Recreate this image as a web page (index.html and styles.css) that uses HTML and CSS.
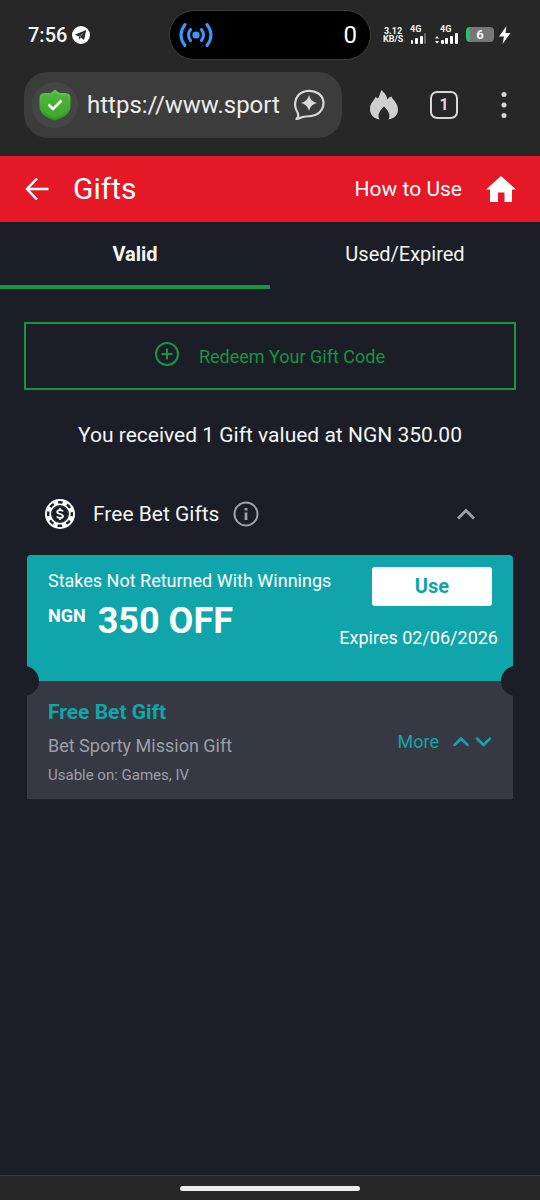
FILE: index.html
```
<!DOCTYPE html>
<html lang="en">
<head>
<meta charset="utf-8">
<meta name="viewport" content="width=device-width, initial-scale=1">
<title>Gifts</title>
<link rel="stylesheet" href="styles.css">
</head>
<body>
<div class="status">
  <div class="status-left">
    <span class="clock">7:56</span>
    <svg class="telegram" width="18" height="18" viewBox="0 0 18 18"><circle cx="9" cy="9" r="9" fill="#fff"/><path d="M2.7 8.7 14.2 4 12 14 8.2 11.1 11.5 6.9 6.6 10.2Z" fill="#272727"/><path d="M6.6 10.2 7.3 13.6 9 11.8 8.2 11.1 11.5 6.9Z" fill="#4a4a4a"/></svg>
  </div>
  <div class="island">
    <svg width="34" height="26" viewBox="0 0 34 26" fill="none" stroke="#3b97fb" stroke-linecap="round"><circle cx="17" cy="13" r="3.6" fill="#3b97fb" stroke="none"/><g stroke-width="3"><path d="M11.5 7.5Q7.5 13 11.5 18.500M22.500 7.500Q26.500 13 22.500 18.500"/><path d="M6 2.500Q-2 13 6 23.500M28 2.500Q36 13 28 23.500"/></g></svg>
    <span>0</span>
  </div>
  <div class="status-right">
    <div class="speed"><span>3.12</span><span>KB/S</span></div>
    <div class="signal">
      <span>4G</span>
      <svg width="17" height="11" viewBox="0 0 17 11" fill="#fff"><rect x="1" y="7" width="2" height="4" rx="1"/><rect x="5" y="5" width="3" height="6" rx="1"/><rect x="10" y="3" width="3" height="8" rx="1"/><rect x="14" y="0" width="2" height="11" rx="1" fill="#666"/></svg>
    </div>
    <div class="signal signal-data">
      <span>4G</span>
      <svg width="23" height="11" viewBox="0 0 23 11" fill="#fff"><path d="M0 5.500 2 3 4 5.500ZM0 8 4 8 2 10.500Z"/><rect x="6" y="7" width="3" height="4" rx="1"/><rect x="10" y="5" width="3" height="6" rx="1"/><rect x="15" y="3" width="3" height="8" rx="1"/><rect x="20" y="0" width="3" height="11" rx="1"/></svg>
    </div>
    <div class="battery">6</div>
    <svg class="bolt" width="12" height="18" viewBox="0 0 12 18"><path d="M7.500 0 0 10.500H5L3.500 18 11.500 7H6.500Z" fill="#fff"/></svg>
  </div>
</div>

<div class="browser">
  <div class="address">
    <span class="shield"><svg width="32" height="32" viewBox="0 0 32 32"><defs><linearGradient id="green" x1="0" y1="0" x2="0" y2="1"><stop offset="0" stop-color="#67c552"/><stop offset="1" stop-color="#26951b"/></linearGradient></defs><path d="M16 0.500C18 2 19 4 22 4 25 4 28 3.500 30.500 5.500L31.500 8V17C31.500 24 26 28.500 16 31.500 6 28.500 0.500 24 0.500 17V8L1.500 5.500C4 3.500 7 4 10 4 13 4 14 2 16 0.500Z" fill="url(#green)"/><path d="M16 3C17 4.500 19 6 22 6 25 6 27 6 29 7.500V17C29 22.500 25 26 16 29 7 26 3 22.500 3 17V7.500C5 6 7 6 10 6 13 6 15 4.500 16 3Z" fill="#47b133" opacity=".65"/><path d="M9.500 15.500 14 20 22.500 11.500" fill="none" stroke="#fff" stroke-width="2.500"/></svg></span>
    <input class="url" type="text" aria-label="Address" value="https://www.sport">
    <button class="icon-button" type="button" aria-label="Assistant"><svg width="32" height="32" viewBox="0 0 32 32"><path d="M3.500 30C6 27.500 6 25.500 4 22.500 1 17.500 1.500 10 6 5.500 10.500 1 20 0.500 25.500 4.500 31 8.500 32 15.500 28.500 21 25 26.500 18 27.500 13 27.500 9.500 27.500 6.500 29.500 3.500 30Z" fill="none" stroke="#d8d8d8" stroke-width="2.200" stroke-linejoin="round"/><path d="M16 6Q17.500 12.500 24 14 17.500 15.500 16 22 14.500 15.500 8 14 14.500 12.500 16 6Z" fill="#d8d8d8"/></svg></button>
  </div>
  <button class="icon-button" type="button" aria-label="Clear data"><svg width="28" height="30" viewBox="0 0 28 30"><path d="M11.500 0C12.500 1 16.500 4.500 17.500 9.500Q18.500 7 21.500 6.500C22 9 28 13 28 19.500 28 25 24.500 28.500 18.500 29.500 21 25 18 20 14 16.500 10 20 7 25 9.500 29.500 3.500 28.500 0 24.500 0 19 0 12.500 4 11.500 5.500 7L8 8.500C9.500 6 10 3 11.500 0Z" fill="#cfcfcf"/></svg></button>
  <button class="tab-count" type="button" aria-label="Open tabs">1</button>
  <button class="icon-button menu" type="button" aria-label="Menu"><svg width="6" height="28" viewBox="0 0 6 28" fill="#d8d8d8"><circle cx="3" cy="3.500" r="2.500"/><circle cx="3" cy="14" r="2.500"/><circle cx="3" cy="24.500" r="2.500"/></svg></button>
</div>

<header class="header">
  <button class="icon-button" type="button" aria-label="Back"><svg width="24" height="24" viewBox="0 0 24 24" fill="none" stroke="#fff" stroke-width="2.500"><path d="M23.500 12H2M12 1.500 2 12 12 22.500"/></svg></button>
  <h1>Gifts</h1>
  <a href="#help">How to Use</a>
  <a class="home" href="#home" aria-label="Home"><svg width="30" height="26" viewBox="0 0 30 26"><path d="M15 0 30 13.500H26V26H18.500V16.500H12V26H4V13.500H0Z" fill="#fff"/></svg></a>
</header>

<main>
  <nav class="tabs">
    <button class="tab tab-active" type="button">Valid</button>
    <button class="tab" type="button">Used/Expired</button>
  </nav>
  <button class="redeem" type="button">
    <svg width="24" height="24" viewBox="0 0 24 24" fill="none" stroke="#179440" stroke-width="2"><circle cx="12" cy="12" r="11"/><path d="M12 6.500V17.500M6.500 12H17.500"/></svg>
    <span>Redeem Your Gift Code</span>
  </button>
  <p class="summary">You received 1 Gift valued at NGN 350.00</p>

  <section>
    <div class="group">
      <svg width="30" height="30" viewBox="0 0 30 30"><circle cx="15" cy="15" r="15" fill="#fff"/><circle cx="15" cy="15" r="11.800" fill="none" stroke="#1b1e26" stroke-width="2.400" stroke-dasharray="4.600 4.668" stroke-dashoffset="2.300"/><circle cx="15" cy="15" r="8.400" fill="none" stroke="#1b1e26" stroke-width="1.200"/><circle cx="15" cy="15" r="8" fill="#1b1e26"/><path d="M18 12.500C17.500 10.800 12.300 10.500 12.200 12.900 12.200 15.500 18 14.400 18 17.100 17.900 19.600 12.400 19.300 12 17.400M15 9V11.500M15 18.500V21" fill="none" stroke="#fff" stroke-width="1.700"/></svg>
      <h2>Free Bet Gifts</h2>
      <button class="icon-button" type="button" aria-label="About free bet gifts"><svg width="26" height="26" viewBox="0 0 26 26"><circle cx="13" cy="13" r="11.500" fill="none" stroke="#9c9fa8" stroke-width="2"/><path d="M11.600 7H14.400V9.400H11.600ZM11.600 11.500H14.400V19H11.600Z" fill="#9c9fa8"/></svg></button>
      <button class="icon-button collapse" type="button" aria-label="Collapse"><svg width="18" height="12" viewBox="0 0 18 12" fill="none" stroke="#9c9fa8" stroke-width="3"><path d="M1 10.500 9 2.500 17 10.500"/></svg></button>
    </div>

    <article class="card">
      <div class="card-top">
        <div class="offer">
          <p class="note">Stakes Not Returned With Winnings</p>
          <p class="amount"><span class="currency">NGN</span><strong>350 OFF</strong></p>
        </div>
        <div class="action">
          <button class="use" type="button">Use</button>
          <span class="expires">Expires 02/06/2026</span>
        </div>
      </div>
      <div class="card-bottom">
        <div>
          <h3>Free Bet Gift</h3>
          <p class="mission">Bet Sporty Mission Gift</p>
          <p class="usable">Usable on: Games, IV</p>
        </div>
        <button class="more" type="button">More<svg width="38" height="12" viewBox="0 0 38 12" fill="none" stroke="#12a5a9" stroke-width="2.500" stroke-linecap="round" stroke-linejoin="round"><path d="M1.500 9 8 2.500 14.500 9M24 2.500 30.500 9 37 2.500"/></svg></button>
      </div>
    </article>
  </section>
</main>
<footer class="system-nav"><span class="handle"></span></footer>
</body>
</html>
```
FILE: styles.css
```
* {
  box-sizing: border-box;
}

body {
  margin: 0;
  min-height: 100vh;
  display: flex;
  flex-direction: column;
  background: #1b1e26;
  color: #f4f5f7;
  font-family: Roboto, "Liberation Sans", sans-serif;
}

h1, h2, h3, p {
  margin: 0;
  font-weight: 400;
}

button, input {
  margin: 0;
  padding: 0;
  border: 0;
  background: none;
  color: inherit;
  font: inherit;
}

a {
  color: inherit;
  text-decoration: none;
}

svg {
  display: block;
  flex: none;
}

.icon-button {
  display: flex;
  flex: none;
}

.status {
  display: grid;
  grid-template-columns: 1fr 202px 1fr;
  align-items: center;
  height: 72px;
  padding-bottom: 3px;
  background: #272727;
}

.status-left {
  display: flex;
  align-items: center;
  gap: 5px;
  padding-left: 28px;
}

.clock {
  font-size: 20px;
  font-weight: 500;
}

.island {
  display: flex;
  align-items: center;
  justify-content: space-between;
  height: 50px;
  padding: 0 13px 0 9px;
  border: 1px solid #3d3d3d;
  border-radius: 25px;
  background: #000;
  color: #fff;
  font-size: 24px;
}

.status-right {
  display: flex;
  align-items: center;
  padding-left: 12px;
}

.speed {
  display: flex;
  flex-direction: column;
  width: 20px;
  margin-right: 7px;
  font-size: 9px;
  font-weight: 700;
  line-height: 8px;
  text-align: center;
}

.signal {
  display: flex;
  flex-direction: column;
  align-items: flex-start;
  gap: 1px;
  margin-right: 8px;
  font-size: 9px;
  font-weight: 700;
  line-height: 6px;
}

.signal-data span {
  margin-left: 5px;
}

.battery {
  width: 28px;
  height: 15px;
  margin-right: 5px;
  border-radius: 4px;
  background: linear-gradient(90deg, #2eb872 4px, #777 4px);
  font-size: 13px;
  font-weight: 700;
  line-height: 15px;
  text-align: center;
}

.browser {
  display: flex;
  align-items: center;
  padding: 0 33px 18px 24px;
  background: #272727;
}

.address {
  display: flex;
  flex: 1;
  align-items: center;
  min-width: 0;
  height: 66px;
  margin-right: 28px;
  padding: 0 17px 0 8px;
  border-radius: 24px;
  background: #3c3c3c;
}

.shield {
  display: flex;
  align-items: center;
  justify-content: center;
  width: 46px;
  height: 46px;
  border-radius: 50%;
  background: #454545;
}

.url {
  flex: 1;
  width: 0;
  margin: 0 11px 0 9px;
  color: #ececec;
  font-size: 24px;
}

.tab-count {
  width: 28px;
  height: 28px;
  margin: 0 43px 0 32px;
  border: 2px solid #d8d8d8;
  border-radius: 7px;
  color: #d8d8d8;
  font-size: 16px;
  font-weight: 700;
  line-height: 24px;
}

.header {
  display: flex;
  align-items: center;
  height: 66px;
  padding: 0 24px 0 25px;
  background: #e41827;
  color: #fff;
  font-size: 21px;
}

.header h1 {
  flex: 1;
  margin-left: 24px;
  padding-bottom: 2px;
  font-size: 30px;
}

.home {
  margin-left: 24px;
}

main {
  flex: 1;
}

.tabs {
  display: grid;
  grid-template-columns: 1fr 1fr;
}

.tab {
  height: 67px;
  border-bottom: 4px solid transparent;
  font-size: 20px;
}

.tab-active {
  border-color: #179440;
  font-weight: 700;
}

.redeem {
  display: flex;
  align-items: center;
  justify-content: center;
  gap: 20px;
  width: calc(100% - 48px);
  height: 68px;
  margin: 33px 24px 0;
  border: 2px solid #179440;
  color: #179440;
  font-size: 18px;
}

.redeem svg {
  margin-bottom: 4px;
}

.summary {
  margin-top: 32px;
  font-size: 21px;
  line-height: 26px;
  text-align: center;
}

.group {
  display: flex;
  align-items: center;
  height: 82px;
  margin-top: 25px;
  padding: 0 65px 0 45px;
}

.group h2 {
  margin: 0 14px 0 18px;
  font-size: 21px;
}

.collapse {
  margin-left: auto;
}

.card {
  position: relative;
  margin: 0 27px;
}

.card-top {
  position: relative;
  display: flex;
  justify-content: space-between;
  height: 126px;
  padding: 12px 15px 0 21px;
  border-radius: 4px 4px 0 0;
  background: #0fa5aa;
  color: #fff;
}

.card-top::before,
.card-top::after {
  content: "";
  position: absolute;
  bottom: -15px;
  width: 30px;
  height: 30px;
  border-radius: 50%;
  background: #1b1e26;
}

.card-top::before {
  left: -18px;
}

.card-top::after {
  right: -18px;
}

.note {
  font-size: 18px;
  line-height: 28px;
}

.amount {
  display: flex;
  align-items: flex-start;
  gap: 12px;
  margin-top: 5px;
}

.currency {
  font-size: 18px;
  font-weight: 700;
  line-height: 32px;
}

.amount strong {
  font-size: 36px;
  line-height: 42px;
}

.action {
  display: flex;
  flex-direction: column;
  align-items: flex-end;
}

.use {
  width: 120px;
  height: 39px;
  margin-right: 6px;
  padding-bottom: 2px;
  border-radius: 3px;
  background: #fff;
  color: #0fa5aa;
  font-size: 20px;
  font-weight: 700;
}

.expires {
  margin-top: 20px;
  font-size: 18px;
  line-height: 24px;
}

.card-bottom {
  display: flex;
  align-items: center;
  justify-content: space-between;
  height: 118px;
  padding: 4px 22px 0 21px;
  background: #363943;
  color: #9c9fa8;
}

.card-bottom h3 {
  color: #12a5a9;
  font-size: 21px;
  font-weight: 700;
  line-height: 30px;
}

.mission {
  margin-top: 5px;
  font-size: 18px;
  line-height: 28px;
}

.usable {
  margin-top: 3px;
  font-size: 15px;
  line-height: 24px;
}

.more {
  display: flex;
  align-items: center;
  gap: 14px;
  color: #12a5a9;
  font-size: 18px;
  line-height: 26px;
}

.system-nav {
  display: flex;
  align-items: center;
  justify-content: center;
  height: 25px;
  border-top: 1px solid #3d3d3d;
  background: #272727;
}

.handle {
  width: 180px;
  height: 5px;
  border-radius: 3px;
  background: #ececec;
}
```
